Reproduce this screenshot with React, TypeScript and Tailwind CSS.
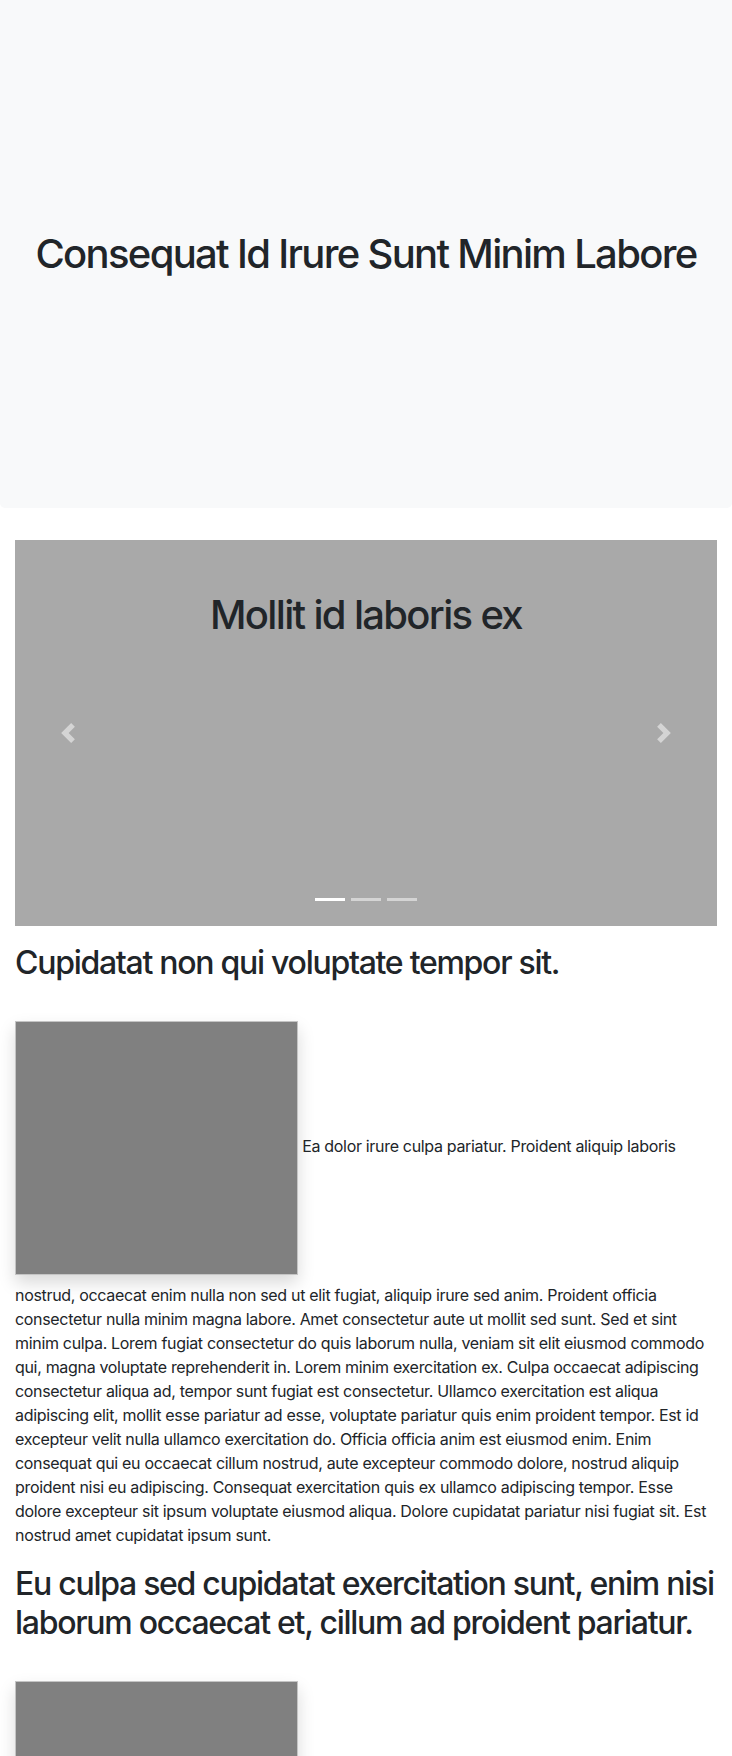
import React from "react";

const paragraphOne =
  "Ea dolor irure culpa pariatur. Proident aliquip laboris nostrud, occaecat enim nulla non sed ut elit fugiat, aliquip irure sed anim. Proident officia consectetur nulla minim magna labore. Amet consectetur aute ut mollit sed sunt. Sed et sint minim culpa. Lorem fugiat consectetur do quis laborum nulla, veniam sit elit eiusmod commodo qui, magna voluptate reprehenderit in. Lorem minim exercitation ex. Culpa occaecat adipiscing consectetur aliqua ad, tempor sunt fugiat est consectetur. Ullamco exercitation est aliqua adipiscing elit, mollit esse pariatur ad esse, voluptate pariatur quis enim proident tempor. Est id excepteur velit nulla ullamco exercitation do. Officia officia anim est eiusmod enim. Enim consequat qui eu occaecat cillum nostrud, aute excepteur commodo dolore, nostrud aliquip proident nisi eu adipiscing. Consequat exercitation quis ex ullamco adipiscing tempor. Esse dolore excepteur sit ipsum voluptate eiusmod aliqua. Dolore cupidatat pariatur nisi fugiat sit. Est nostrud amet cupidatat ipsum sunt.";

const paragraphTwo =
  "Labore sunt velit commodo ipsum, aliquip dolor do nulla. Irure esse eiusmod cillum proident, ut fugiat culpa magna sed tempor. Aute laboris officia sint est.";

const App = () => {
  return (
    <div className="font-['Inter','Roboto',sans-serif] text-[#212529] bg-white">
      <div className="flex h-[508px] items-center justify-center rounded-b-[5px] bg-[#f8f9fa] mb-8">
        <h1 className="text-[40px] font-medium leading-[1.2] tracking-[-0.042em]">
          Consequat Id Irure Sunt Minim Labore
        </h1>
      </div>
      <div className="px-[15px]">
        <Carousel />
        <Section title="Cupidatat non qui voluptate tempor sit." text={paragraphOne} />
        <Section
          title="Eu culpa sed cupidatat exercitation sunt, enim nisi laborum occaecat et, cillum ad proident pariatur."
          text={paragraphTwo}
        />
      </div>
    </div>
  );
};
export default App;

function Carousel() {
  return (
    <div className="relative h-[386px] bg-[#a9a9a9] pt-[51px] mb-[18px]">
      <h1 className="text-center text-[40px] font-medium leading-[1.2] tracking-[-0.042em]">
        Mollit id laboris ex
      </h1>
      <button className="absolute left-0 top-0 bottom-0 flex w-[15%] items-center justify-center opacity-50">
        <Chevron flip={false} />
      </button>
      <button className="absolute right-0 top-0 bottom-0 flex w-[15%] items-center justify-center opacity-50">
        <Chevron flip={true} />
      </button>
      <div className="absolute bottom-[25px] left-0 right-0 flex justify-center gap-[6px]">
        <span className="h-[3px] w-[30px] bg-white" />
        <span className="h-[3px] w-[30px] bg-white opacity-50" />
        <span className="h-[3px] w-[30px] bg-white opacity-50" />
      </div>
    </div>
  );
}

function Chevron({ flip }: { flip: boolean }) {
  return (
    <svg width="20" height="20" viewBox="0 0 8 8" fill="#fff">
      {flip ? (
        <path d="M2.75 0l-1.5 1.5L3.75 4l-2.5 2.5L2.75 8l4-4-4-4z" />
      ) : (
        <path d="M5.25 0l-4 4 4 4 1.5-1.5L4.25 4l2.5-2.5L5.25 0z" />
      )}
    </svg>
  );
}

function Section({ title, text }: { title: string; text: string }) {
  return (
    <div>
      <h2 className="text-[32px] font-medium leading-[1.2] tracking-[-0.04em] mb-2">{title}</h2>
      <p className="mt-[31px] mb-[18px] text-base leading-6 tracking-[-0.02em]">
        <span className="my-2 inline-block h-[254px] w-[283px] align-middle border border-[#c4c4c4] bg-[#808080] shadow-[0_8px_16px_rgba(0,0,0,0.15)]" />{" "}
        {text}
      </p>
    </div>
  );
}
